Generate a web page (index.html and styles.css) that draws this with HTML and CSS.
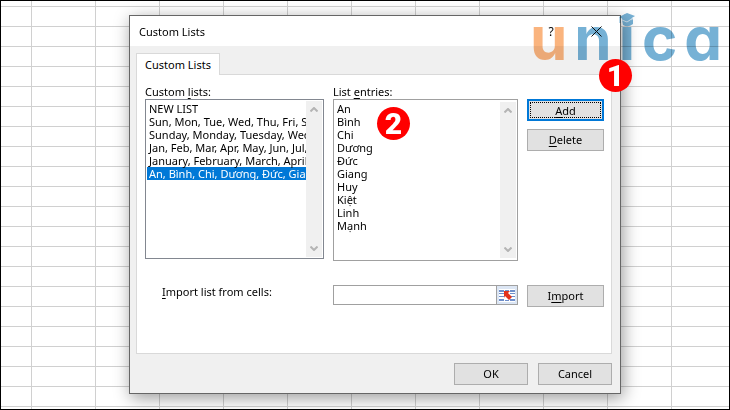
FILE: index.html
```html
<!DOCTYPE html>
<html lang="en">
<head>
    <meta charset="UTF-8">
    <meta name="viewport" content="width=device-width, initial-scale=1.0">
    <title>Custom Lists</title>
    <link rel="stylesheet" href="styles.css">
</head>
<body>

<main class="sheet">
    <section class="dialog" role="dialog" aria-labelledby="dialogTitle">
        <header class="titlebar">
            <h1 id="dialogTitle">Custom Lists</h1>
            <button type="button" class="help" aria-label="Help">?</button>
            <button type="button" class="close" aria-label="Close">
                <svg width="11" height="11" viewBox="0 0 11 11"><path d="M0.5 0.5l10 10M10.5 0.5l-10 10" stroke="#111" fill="none"/></svg>
            </button>
        </header>

        <form class="content">
            <button type="button" class="tab">Custom Lists</button>

            <div class="panel">
                <div class="lists">
                    <div class="field">
                        <label for="customLists">Custom <u>l</u>ists:</label>
                        <div class="box customBox">
                            <select id="customLists" size="11">
                                <option>NEW LIST</option>
                                <option>Sun, Mon, Tue, Wed, Thu, Fri, Sat</option>
                                <option>Sunday, Monday, Tuesday, Wednesday</option>
                                <option>Jan, Feb, Mar, Apr, May, Jun, Jul, Aug</option>
                                <option>January, February, March, April, May</option>
                                <option selected>An, Bình, Chi, Dương, Đức, Giang, Huy</option>
                            </select>
                            <div class="scroll">
                                <svg width="8" height="5" viewBox="0 0 8 5"><path d="M0.5 4.5l3.5-3.5 3.5 3.5"/></svg>
                                <svg width="8" height="5" viewBox="0 0 8 5"><path d="M0.5 0.5l3.5 3.5 3.5-3.5"/></svg>
                            </div>
                        </div>
                    </div>

                    <div class="field">
                        <label for="entries">List <u>e</u>ntries:</label>
                        <div class="box entriesBox">
                            <textarea id="entries" spellcheck="false">An
Bình
Chi
Dương
Đức
Giang
Huy
Kiệt
Linh
Mạnh</textarea>
                            <div class="scroll">
                                <svg width="8" height="5" viewBox="0 0 8 5"><path d="M0.5 4.5l3.5-3.5 3.5 3.5"/></svg>
                                <svg width="8" height="5" viewBox="0 0 8 5"><path d="M0.5 0.5l3.5 3.5 3.5-3.5"/></svg>
                            </div>
                            <span class="badge badgeTwo">2</span>
                        </div>
                    </div>

                    <div class="actions">
                        <button type="button" class="btn primary"><span><u>A</u>dd</span></button>
                        <button type="button" class="btn"><span><u>D</u>elete</span></button>
                        <span class="badge badgeOne">1</span>
                    </div>
                </div>

                <div class="importRow">
                    <label for="cells"><u>I</u>mport list from cells:</label>
                    <div class="cellInput">
                        <input type="text" id="cells">
                        <button type="button" aria-label="Select range">
                            <svg width="16" height="13" viewBox="0 0 16 13">
                                <path fill="#fff" d="M0 0h16v13H0z"/>
                                <path fill="#6f8fca" d="M0 1h5v2H0zM6 1h4v1H6zM11 1h5v2h-5zM0 4h5v1H0zM11 4h5v1h-5zM0 7h5v1H0zM11 7h5v1h-5zM0 10h5v2H0zM6 11h4v1H6zM11 10h5v2h-5z"/>
                                <path fill="#e2321c" d="M5 2h6l-2 2 4 4-3 3-4-4-1 2z"/>
                            </svg>
                        </button>
                    </div>
                    <button type="button" class="btn"><span>I<u>m</u>port</span></button>
                </div>
            </div>

            <footer class="footer">
                <button type="button" class="btn">OK</button>
                <button type="button" class="btn">Cancel</button>
            </footer>
        </form>
    </section>

    <div class="logo">
        <span class="orange">u</span><span>n</span><span class="capped">i<svg width="16" height="14" viewBox="0 0 16 14">
            <path d="M0 4L8 0l8 3-8 5z"/>
            <path d="M3 7l5 3 6-4v5q-5 4-10 1z"/>
            <path d="M1 4v6" stroke="#76b1d5"/>
            <path d="M3 7l5 2 6-4" fill="none" stroke="#cfe3f0"/>
        </svg></span><span>c</span><span>a</span>
    </div>
</main>

</body>
</html>
```

FILE: styles.css
```css
* {
    box-sizing: border-box;
}

body {
    margin: 0;
    font-family: "Noto Sans", "Open Sans", sans-serif;
    font-size: 11px;
    line-height: 13px;
    color: #000;
}

button, input, select, textarea {
    font: inherit;
    color: inherit;
    margin: 0;
    border-radius: 0;
    outline: none;
}

u {
    text-underline-offset: 2px;
}

/* spreadsheet behind the dialog */
.sheet {
    position: relative;
    min-height: 100vh;
    padding: 14px 108px 14px 128px;
    border: 1px solid #000;
    overflow: hidden;
    background-color: #fff;
    background-image:
        linear-gradient(90deg, #d0d0d0 1px, transparent 1px),
        linear-gradient(#d0d0d0 1px, transparent 1px);
    background-size: 64px 20px;
    background-position: 30px 5px;
}

.dialog {
    border: 1px solid #666;
    background: #f0f0f0;
    box-shadow: 2px 4px 16px rgba(0, 0, 0, 0.4);
}

.titlebar {
    display: flex;
    align-items: center;
    height: 30px;
    padding: 0 18px 0 9px;
    background: #fff;
}

.titlebar h1 {
    flex: 1;
    margin: 0;
    font-size: 11px;
    font-weight: normal;
}

.titlebar button {
    display: flex;
    align-items: center;
    justify-content: center;
    width: 12px;
    padding: 0;
    border: 0;
    background: none;
}

.titlebar .help {
    margin-right: 33px;
    font-size: 12px;
}

.content {
    padding: 7px 8px 8px 6px;
}

.tab {
    position: relative;
    display: block;
    width: 84px;
    height: 22px;
    padding: 0;
    border: 1px solid #d9d9d9;
    border-bottom: 0;
    background: #fff;
    z-index: 1;
}

.panel {
    margin-top: -1px;
    padding: 10px 7px 46px 8px;
    border: 1px solid #d9d9d9;
    background: #fff;
}

.lists, .importRow {
    display: grid;
    grid-template-columns: minmax(0, 179fr) minmax(0, 185fr) 77px;
    column-gap: 9px;
}

.field label {
    display: block;
    margin-bottom: 1px;
}

.box {
    position: relative;
    display: flex;
    border: 1px solid #a0a0a0;
    background: #fff;
}

.customBox {
    height: 160px;
    padding: 1px;
    border-color: #828790;
}

.entriesBox {
    height: 162px;
    padding: 2px 1px;
}

.box select, .box textarea {
    flex: 1;
    min-width: 0;
    padding: 0;
    border: 0;
    overflow: hidden;
    background: #fff;
    resize: none;
}

.box textarea {
    padding: 0 2px;
}

/* rows overlap by 2px so that descenders are not cut */
.box option {
    height: 15px;
    min-height: 15px;
    margin-bottom: -2px;
    padding: 0 2px;
}

.box option:checked {
    background: linear-gradient(#0078d7, #0078d7) 0 1px / 100% 13px no-repeat;
    color: #fff;
}

.scroll {
    display: flex;
    flex-direction: column;
    justify-content: space-between;
    align-items: center;
    width: 16px;
    padding: 6px 0;
    background: #f0f0f0;
}

.scroll path {
    fill: none;
    stroke: #b4b4b4;
    stroke-width: 2;
}

.actions {
    position: relative;
    display: flex;
    flex-direction: column;
    gap: 8px;
    padding-top: 14px;
}

.btn {
    height: 22px;
    padding: 0 0 1px;
    border: 1px solid #adadad;
    background: #e1e1e1;
}

.primary {
    padding: 1px;
    border: 2px solid #0078d7;
}

.primary span {
    display: flex;
    align-items: center;
    justify-content: center;
    height: 100%;
    border: 1px dotted #000;
}

.importRow {
    margin-top: 24px;
}

.importRow label {
    padding-left: 17px;
}

.cellInput {
    display: flex;
    height: 20px;
}

.cellInput input {
    flex: 1;
    min-width: 0;
    border: 1px solid #a0a0a0;
    border-right: 0;
}

.cellInput button {
    display: flex;
    align-items: center;
    justify-content: center;
    width: 22px;
    padding: 0;
    border: 1px solid #a0a0a0;
    background: #dce6f4;
}

.footer {
    display: flex;
    justify-content: flex-end;
    gap: 10px;
    margin-top: 9px;
}

.footer .btn {
    width: 74px;
}

/* numbered step markers */
.badge {
    position: absolute;
    width: 33px;
    height: 33px;
    border-radius: 50%;
    background: #f00;
    color: #fff;
    font: 900 30px/33px Roboto, sans-serif;
    text-align: center;
    z-index: 2;
}

.badgeOne {
    top: -26px;
    right: -28px;
}

.badgeTwo {
    top: 7px;
    left: 43px;
}

.logo {
    position: absolute;
    top: -1px;
    right: 7px;
    display: flex;
    justify-content: space-between;
    width: 192px;
    font: bold 60px/76px Inter, sans-serif;
    font-feature-settings: "cv11";
    color: #76b1d5;
    mix-blend-mode: multiply;
    pointer-events: none;
}

.logo .orange {
    color: #fab47e;
}

.capped {
    position: relative;
}

.capped svg {
    position: absolute;
    top: 13px;
    left: 0;
    fill: #76b1d5;
}
```
